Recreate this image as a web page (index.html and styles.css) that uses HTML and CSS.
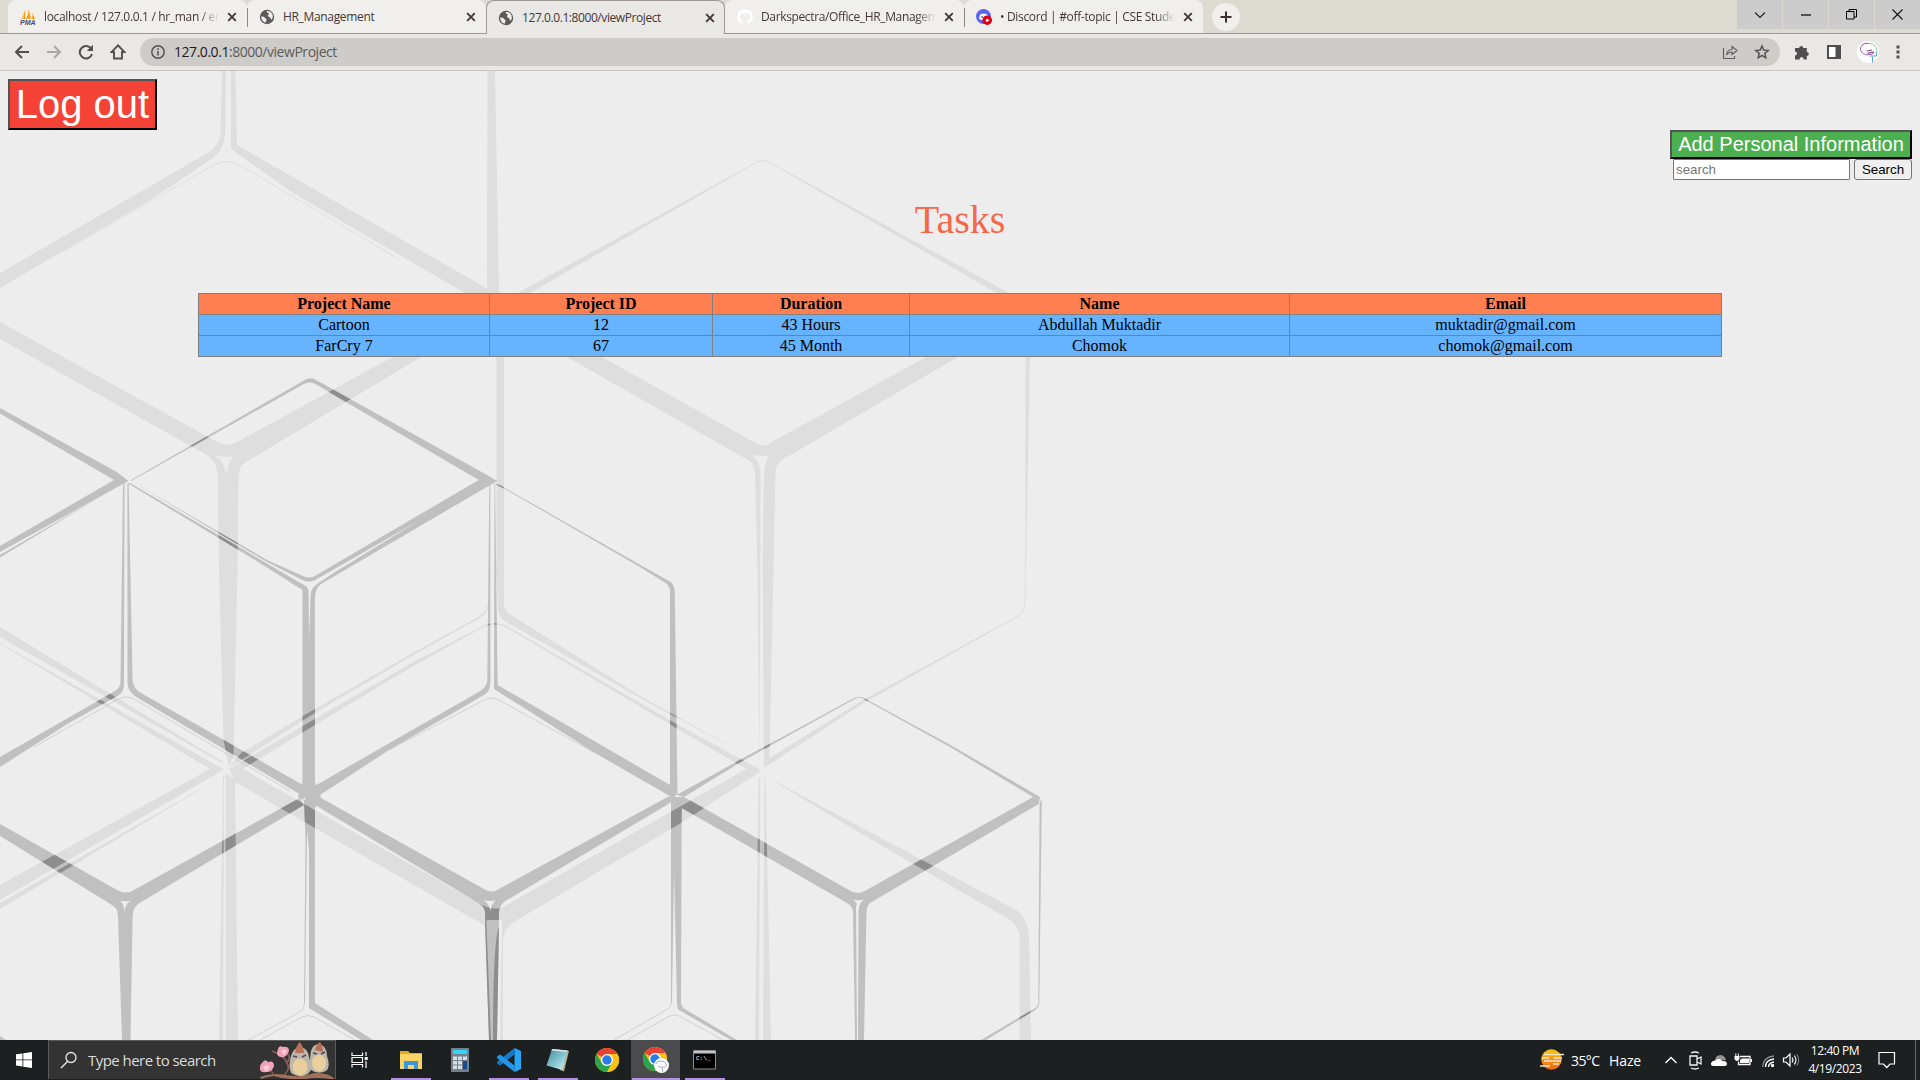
FILE: index.html
```html
<!DOCTYPE html>
<html lang="en">
<head>
<meta charset="utf-8">
<title>127.0.0.1:8000/viewProject</title>
<link rel="stylesheet" href="styles.css">
</head>
<body>
<svg class="defs" width="0" height="0" aria-hidden="true">
  <defs>
    <symbol id="i-close" viewBox="0 0 10 10"><path d="M1.2 1.2l7.6 7.6M8.8 1.2L1.2 8.8" stroke="#45363a" stroke-width="1.9"/></symbol>
    <symbol id="i-globe" viewBox="0 0 16 16"><circle cx="8" cy="8" r="7.2" fill="#5a5a5a"/><path d="M7.5 2.2c2-.5 4.500.5 5.600 2.400.9 1.700 1 4-.1 5.800-1.200.3-1.700-.9-1.500-2-1.300-.2-2.600-.8-2.400-2.200 0-1 1-1.100.700-1.900-.8-.4-1.700-.6-2.300-2.100zM2.200 7.600c1.500.2 2.900.1 3.500 1 .4 1 1.700 1 1.900 2.200-.2 1-.7 1.700-.9 3C4 13 2 10.800 2.200 7.600z" fill="#f0efeb"/></symbol>
    <symbol id="i-chrome" viewBox="0 0 24 24"><circle cx="12" cy="12" r="12" fill="#fbc116"/><path d="M12 12L1.600 6A12 12 0 0 1 22.400 6H12z" fill="#e94234"/><path d="M1.600 6A12 12 0 0 0 12 24l5.200-9L12 12 6.800 15z" fill="#2ba24c"/><path d="M22.400 6H12l5.200 9L12 24A12 12 0 0 0 22.400 6z" fill="#fbc116"/><circle cx="12" cy="12" r="6" fill="#fff"/><circle cx="12" cy="12" r="4.700" fill="#2a7de9"/></symbol>
  </defs>
</svg>
<div class="screen">
  <header class="tabstrip">
    <div class="tab">
      <svg class="fav" viewBox="0 0 16 16"><path d="M1 10Q4 6 5 1l.5 9zM6 10Q9 5 8.500 0L11 9.500zM11.500 10q1.500-3 .5-6l3 6z" fill="#f89c0e"/><path d="M1 10Q4 6 4 2l-.5 8z" fill="#fbcf8a"/><text x="0" y="16" class="pma">PMA</text></svg>
      <span class="title fade t1">localhost / 127.0.0.1 / hr_man / em</span><svg class="x"><use href="#i-close"/></svg>
    </div>
    <div class="tab sep"><svg class="fav"><use href="#i-globe"/></svg><span class="title t2">HR_Management</span><svg class="x"><use href="#i-close"/></svg></div>
    <div class="tab active"><svg class="fav"><use href="#i-globe"/></svg><span class="title t3">127.0.0.1:8000/viewProject</span><svg class="x"><use href="#i-close"/></svg></div>
    <div class="tab">
      <svg class="fav" viewBox="0 0 16 16"><path d="M8 .3a7.700 7.700 0 0 0-2.600 15v-2.200c-2 .4-2.600-.9-2.900-1.500l1 .3c.6 1 1.400.9 2 .7.100-.5.300-.8.500-1C3.800 11.300 3 10 3 8c0-1 .3-1.700.8-2.300-.1-.5-.2-1.300.1-2.100 1 0 1.800.5 2.300.9a7 7 0 0 1 3.600 0c.6-.4 1.400-.9 2.300-.9.3.8.2 1.600.1 2.100.5.600.8 1.300.8 2.300 0 2-.9 3.300-3 3.600.4.400.6.900.6 1.700v2A7.700 7.700 0 0 0 8 .3z" fill="#fff"/></svg>
      <span class="title fade t4">Darkspectra/Office_HR_Managemen</span><svg class="x"><use href="#i-close"/></svg>
    </div>
    <div class="tab sep">
      <svg class="fav" viewBox="0 0 16 16"><circle cx="7.500" cy="7.500" r="7.500" fill="#5865f2"/><path d="M3.200 10c0-3 1-5 2.300-5.200h4C10.500 5 11.500 6 12 8l-2 3H5.500z" fill="#fff"/><circle cx="6" cy="8" r="1" fill="#5865f2"/><circle cx="11.200" cy="11.200" r="4.800" fill="#e00012"/><circle cx="11.200" cy="11.200" r="1.500" fill="#fff"/></svg>
      <span class="title fade t5">• Discord | #off-topic | CSE Studen</span><svg class="x"><use href="#i-close"/></svg>
    </div>
    <div class="newtab"><svg width="12" height="12"><path d="M6 .5v11M.5 6h11" stroke="#3c3034" stroke-width="2"/></svg></div>
    <div class="winbtns">
      <div class="wb"><svg width="12" height="8"><path d="M1 1.500l5 5 5-5" fill="none" stroke="#222" stroke-width="1.100"/></svg></div>
      <div class="wb"><svg width="10" height="2"><path d="M0 1h10" stroke="#000" stroke-width="1.200"/></svg></div>
      <div class="wb"><svg width="11" height="11"><path d="M.5 2.500h7.500V10H.5zM3 2.500V.5h7.500V8H8" fill="none" stroke="#000"/></svg></div>
      <div class="wb"><svg width="11" height="11"><path d="M.5.5l10 10M10.500.5l-10 10" stroke="#111" stroke-width="1.100"/></svg></div>
    </div>
  </header>

  <nav class="toolbar">
    <svg class="nav" viewBox="0 0 16 16"><path d="M15 8H2.500M8 2L2 8l6 6" fill="none" stroke="#505050" stroke-width="2"/></svg>
    <svg class="nav" viewBox="0 0 16 16"><path d="M1 8h12.500M8 2l6 6-6 6" fill="none" stroke="#a9a8a6" stroke-width="2"/></svg>
    <svg class="nav" viewBox="0 0 16 16"><path d="M13.300 5A6.200 6.200 0 1 0 14 10" fill="none" stroke="#505050" stroke-width="2"/><path d="M15 .8V7H8.800z" fill="#505050"/></svg>
    <svg class="nav" viewBox="0 0 16 16"><path d="M8 1.300L1.500 8H4v6.500h8V8h2.500z" fill="none" stroke="#505050" stroke-width="1.900"/></svg>
    <div class="omnibox">
      <svg width="14" height="14"><circle cx="7" cy="7" r="6.200" fill="none" stroke="#55565a" stroke-width="1.500"/><path d="M7 6v4.500M7 3.300v1.600" stroke="#55565a" stroke-width="1.600"/></svg>
      <span class="url"><b>127.0.0.1</b>:8000/viewProject</span>
      <svg class="share" width="16" height="16" viewBox="0 0 16 16"><path d="M1.500 4v10.500h11V12M4.500 11c.5-4 2.500-5.500 5.500-5.500V2.500l5 4-5 4V8c-2.500 0-4 .8-5.500 3z" fill="none" stroke="#606164" stroke-width="1.200"/></svg>
      <svg width="16" height="16" viewBox="0 0 16 16"><path d="M8 2l1.700 4.100 4.500.4-3.400 2.900 1 4.400L8 11.500l-3.800 2.300 1-4.400-3.400-2.900 4.500-.4z" fill="none" stroke="#55565a" stroke-width="1.500"/></svg>
    </div>
    <div class="tools">
      <svg width="16" height="16" viewBox="0 0 16 16"><path d="M1 4h4.200a2 2 0 1 1 4 0h3.600v4a2 2 0 1 1 0 4v3.500H9.500a1.900 1.900 0 1 0-3.700 0H1v-4a2 2 0 1 0 0-4z" fill="#4f4f4f"/></svg>
      <svg width="14" height="14"><path d="M1 1h12v12H1z" fill="#fff" stroke="#4f4f4f" stroke-width="2"/><path d="M8.500 0H14v14H8.500z" fill="#4f4f4f"/></svg>
      <svg width="22" height="22"><circle cx="11" cy="11" r="11" fill="#fff"/><path d="M3.500 8.500C3 4 8 1.500 12 2.500" fill="none" stroke="#8a4f9b"/><path d="M12 2.500c5 0 9 4 7.500 9.500" fill="none" stroke="#8cc8b0"/><path d="M3.500 8.500c1 4 4 5 7.500 5.500" fill="none" stroke="#7d60c0"/><path d="M10 10l5-1M11 13c3 1 5 0 6-2l-6 1z" fill="none" stroke="#7c3f8c"/><path d="M19.500 12v3h-7M15.500 15.500v6" fill="none" stroke="#5aa4cf"/></svg>
      <svg width="4" height="14"><path d="M.5.500h3v3h-3zM.5 5.500h3v3h-3zM.5 10.500h3v3h-3z" fill="#505050"/></svg>
    </div>
  </nav>

  <main class="page">
    <svg class="cubes" viewBox="0 71 1920 969" width="1920" height="969" aria-hidden="true">
      <defs>
        <clipPath id="light">
          <path d="M222 71h4l-1 64q-1 14-12 23L155 197 0 288V273L208 152.700Q220 146 220.500 132z"/>
          <path d="M231 71h4.500L237 145 488 289V293L497 298 490 310 465 293 293 193 231 149z"/>
          <path d="M487.500 71h7.500L499 293 504 357V605Q505 612 511 615L760 769 748 770 540 645 505 621Q498 617 498 607L496.500 570V357H489.500L487 293z" class="none"/>
          <path d="M487.500 71h7.500L499 293 504 357V605Q505 612 511 615L640 696 758 761 640 698 505 621Q498 617 498 607L496.500 570V357H489.500L487 293z"/>
          <path d="M440 340L517.500 293 757 161.500Q763 158.500 769 161.500L1009 293 1030 306V357L1026 570H1025.300V357L1020 306 996.600 293 769 162.500Q763 159.500 757 162.500L530 293 500 312z"/>
          <path d="M500 315L602 357 755.500 443Q762.500 448 770 443L926 357 1010 305 1030 306 958 357 782 460Q775.500 465 775.500 473L773.500 570 769.500 758 863 700 1018 615.500Q1024.600 611 1024.600 604L1025.200 545H1026L1025.600 604Q1025 612 1018 616.700L863 703.500 764 768 762.500 560 764 473Q765 462 769 455.500 762 457.500 752 454.500 760.500 462 760.500 475V570L759.500 763 757.500 570 755 473Q754 463 748 460L567 357 490 318z"/>
          <path d="M0 322L218.600 442.700Q227 447 237.600 441.700L392.500 357 470 314 495 314 421 357 244.500 463Q239 467 238.600 475L237.500 570 233.500 755 229 767 223.500 740 219 570 217.600 473Q216 461 206.600 455L0 339z"/>
          <path d="M0 627L223 762V763.500L0 637zM0 643L224 769.500 0 900V885L210 769 0 643.700zM223 776L0 909V903z"/>
          <path d="M229 768L241 753 310 711.700 410 654.500 479 616.500Q487 612 487 605H488Q488 613 480 618L410 657 310 716z"/>
          <path d="M229 769L310 721.700 410 664 483 625.800Q495 621 506 625.500L675 723 761 770 748 770 675 727.500 505 626.700Q495 622.200 484 626.800L410 668 310 728 241 770z"/>
          <path d="M229 768L241 768 482 905Q494 911 503 907L748 768 761 771 681 823 512 923Q504 930 503 940V1040H500L502 920 487 920 485.500 926 235 782z"/>
          <path d="M223 776h1L223 1040h-4zM225.500 773L235 780 238 1040H225.500z"/>
          <path d="M758.600 777h1.700L759 1040h-4zM764.500 777h1L771 1040h-8z"/>
          <path d="M765 776L1016 910Q1028 918 1029 937L1031 1040H1019.600V937Q1019 926 1010 920L860 833z"/>
        </clipPath>
        <clipPath id="dark">
          <path d="M0 408L117 472 128.500 481 0 552V546L114 480 0 413.500zM100 497L0 555V557.500z"/>
          <path d="M123 483h1.500L124 683Q124 692 119 695L69 723 0 767V757L115 691Q120.500 688 120.500 681zM127.400 483h1.200L132.600 681Q134 689 141 693L306.500 787 301 795 138 698Q127.500 692 127.500 683z"/>
          <path d="M131 480L303 381Q310 376 317 380.500L487 475 497 481 345 570 321 584Q316 587 315 597V787H302.500V590L255 560 128 483.500 130 483 261 560 306.500 586.500 308.500 590 309 640 310.500 597Q310.500 588 317 584L335 572 420 520 331 571 315 580Q309 583 302 580L263.500 560 131 481 267 560 303 576Q309 579 315 576L325 570 478.600 480 317 385Q310 380.500 303 384.500L131 481z"/>
          <path d="M302.500 783H315L321 797 315 808 298 797z"/>
          <path d="M489.300 483h1L490.400 683Q490 692 484 695L389 750 317 797 311 788 478.600 692Q487.300 687 487.300 680zM494.500 483h.6L497.600 685 670 785 677 793 673 798 595 753 494 689z"/>
          <path d="M494.500 484Q500 484 505 488L644 567 669 581Q674.800 584 674.800 592L677.500 795 670 790V593Q671 588 667 584L640 567 505 489z"/>
          <path d="M0 824L117 890Q126 895 134 890L299.600 798 304 805 139.500 903Q132.600 907 132.600 917L130.500 1040H122L118 917Q118 908 112 905L0 836zM0 1036L6 1040H0z"/>
          <path d="M304 800L315 808V1003L373 1040H361L309 1008V850L307 830 305 1003 304 1003 305.500 840z"/>
          <path d="M311 788L319 797 484 889Q492 894 499 889L667.500 797 675 796 670 803 507 900Q499 904 499 913L497 1040H489L485 913Q485 907 478.600 903L306.500 800z"/>
          <path d="M671 793L675 796 740 759.800 855 697.500Q859 695.800 863 697.500L950 744.700 1040 797 1038.700 804 870 903Q866.500 906 866.500 913L864 1040H858L858.500 905 856 905 857 1040H855L853 912Q853 907 847 903L681.700 808 681 1003 683 1008 737 1040H731L679 1010Q677 1008 677 1003L674 870 672 1003H671L671 797 684 797 849 890Q858 896 866.500 890L1033 797 950 747 862 698.200Q859 697 856 698.200L740 762.500 684 797z"/>
          <path d="M1039.600 803L1041.800 799 1039.300 1003Q1039 1009 1031 1012.500L986 1040H981L1031 1010.500Q1038.300 1007 1038.300 1003z"/>
        </clipPath>
      </defs>
      <g clip-path="url(#light)"><rect y="71" width="1100" height="969" fill="#dedede"/></g>
      <g clip-path="url(#dark)"><rect y="71" width="1100" height="969" fill="#c0c0c0"/></g>
      <g clip-path="url(#light)"><g clip-path="url(#dark)"><rect y="71" width="1100" height="969" fill="#8e8e8e"/></g></g>
      <path d="M499 927L497 1040H493Q493 940 499 927zM485 924h1.500L491 1040h-2z" fill="#8e8e8e"/>
      <path d="M484 900Q490 902 496 900 491 904 490.700 911 489 904 484 900zM120 900.500Q126 902 131 900.500 125 904 124.500 912 124 904 120 900.500zM853 899.500Q859 901 864 899.500 859 903 858.500 911 858 903 853 899.500zM215 455.500Q226 458 234 456 227 462 226.500 476 225 461 215 455.500zM302 800L306 797.500 305 800z" fill="#ededed"/>
      <g fill="none" stroke="#c6c6c6" stroke-width=".7">
        <path d="M34 747L118 699Q126 695 134 699L290 791M389 750L484 700Q491.500 696 499 700L595 753"/>
        <path d="M260 1040L302 1017Q308 1014 314 1017L355 1040M304.700 1003Q304 1009 299.600 1012L248.600 1040M671.300 1003Q671 1008 666 1010L614 1040M627 1040L668 1017Q674.500 1013 681 1017L723 1040"/>
      </g>
      <g fill="none" stroke="#dedede" stroke-width=".9">
        <path d="M60 253L216 164Q227 159 238 164L400 260"/>
      </g>
    </svg>
    <div class="content">
      <button class="logout">Log out</button>
      <div class="side">
        <button class="add">Add Personal Information</button>
        <form class="find"><input type="text" placeholder="search"><button type="button" class="go">Search</button></form>
      </div>
      <h1 class="heading">Tasks</h1>
      <table class="tasks">
        <colgroup><col class="c1"><col class="c2"><col class="c3"><col class="c4"><col class="c5"></colgroup>
        <tr><th>Project Name</th><th>Project ID</th><th>Duration</th><th>Name</th><th>Email</th></tr>
        <tr><td>Cartoon</td><td>12</td><td>43 Hours</td><td>Abdullah Muktadir</td><td>muktadir@gmail.com</td></tr>
        <tr><td>FarCry 7</td><td>67</td><td>45 Month</td><td>Chomok</td><td>chomok@gmail.com</td></tr>
      </table>
    </div>
  </main>

  <footer class="taskbar">
    <div class="start"><svg width="16" height="16"><path d="M0 2.300L6.500 1.400V7.500H0zM7.300 1.300L16 0V7.500H7.300zM0 8.300H6.500V14.500L0 13.600zM7.300 8.300H16V16L7.300 14.700z" fill="#fff"/></svg></div>
    <div class="searchbox">
      <svg width="18" height="18"><circle cx="11" cy="6.500" r="5" fill="none" stroke="#e6e6e6" stroke-width="1.300"/><path d="M7.500 10.500L1 17" stroke="#e6e6e6" stroke-width="1.400"/></svg>
      <span class="prompt">Type here to search</span>
      <svg class="birds" width="77" height="38" viewBox="0 0 77 38">
        <path d="M2 36Q14 31 28 34 44 37 56 32 70 31 77 38L72 38Q60 36 46 38 28 39 16 35 8 36 3 38z" fill="#a0705a"/>
        <path d="M26 34Q33 28 29 22 27 15 14 10M28 22Q32 20 31 13M15 33l-3-6" fill="none" stroke="#8e5f53" stroke-width="1.600"/>
        <path d="M4 22q3-5 6-1 6-2 6 4-2 6-7 6-8 1-7-4 0-4 2-5zM20 8q1-4 5-2 5-1 6 3 0 5-5 7-5 1-7-3 0-3 1-5z" fill="#f0a3b8"/><path d="M5 26q5-4 7 0l-4 5zM23 10q4-3 6 0l-3 4z" fill="#ffcbd8"/>
        <path d="M33 15Q35 7 42 6q8 1 9 10 5 13-1 17-9 5-17-1-3-8 0-17z" fill="#bdb6ab"/><path d="M53 10Q55 3 61 3q8 2 8 12 4 11-1 15-8 4-15-1-2-9 0-19z" fill="#bdb6ab"/>
        <ellipse cx="42" cy="26" rx="7.500" ry="8.500" fill="#e9cf9d"/><ellipse cx="61" cy="22" rx="7" ry="8.500" fill="#e9cf9d"/>
        <path d="M37 12Q38 4 42 1q4 6 4 11zM57 9q1-6 5-8 3 4 3 10z" fill="#b97054"/><path d="M35 15l4 1M44 16l4-2M55 12l4 1M63 13l4-2" stroke="#54465c" stroke-width="1.800"/>
      </svg>
    </div>
    <div class="taskview"><svg width="17" height="16"><path d="M1 .5V3.500H11.500V.5M1 15.500V12.500H11.500v3M1 5.500H11.500v5H1zM15 0v4M15 9v7" fill="none" stroke="#fff" stroke-width="1.200"/><path d="M13.700 5h3v3h-3z" fill="#fff"/></svg></div>
    <div class="apps">
      <div class="app open"><svg width="22" height="20"><path d="M0 1h8l2 2h12v16H0z" fill="#e9a91c"/><path d="M0 4h22v15H0z" fill="#fbd465"/><path d="M4 11h14v8h-4v-4H8v4H4z" fill="#3c96dc"/></svg></div>
      <div class="app"><svg width="18" height="24"><rect width="18" height="24" rx="1" fill="#75818c"/><path d="M2 2h14v4H2z" fill="#35d3f5"/><path d="M2 8.500h4v3.500H2zM7 8.500h4v3.500H7zM12 8.500h4v3.500h-4zM2 13h4v3.500H2zM7 13h4v3.500H7zM2 17.500h4V21H2zM7 17.500h4V21H7z" fill="#d6dde3"/><path d="M12 13h4v8.500h-4z" fill="#174b8c"/></svg></div>
      <div class="app open"><svg width="24" height="24"><path d="M17.500 0v6.500L3 17.500 0 15.500 0 14z" fill="#1479c6"/><path d="M17.500 24v-6.500L3 6.500 0 8.500V10z" fill="#2196e8"/><path d="M17.500 0L24 3v18l-6.500 3z" fill="#29a5f5"/></svg></div>
      <div class="app open"><svg width="24" height="24"><defs><linearGradient id="pad" x2="1" y2="1"><stop stop-color="#3c8c9b"/><stop offset=".6" stop-color="#8fcdd6"/><stop offset="1" stop-color="#d9f3f3"/></linearGradient></defs><path d="M7 1L23 3 18 23.500 14 22z" fill="#b9ab8c"/><path d="M6 1L21.500 2.500 16.500 22 .5 17.500z" fill="url(#pad)"/><path d="M6 1L21.500 2.500 21 4 5.500 2.500z" fill="#dfe7e6"/></svg></div>
      <div class="app"><svg width="24" height="24"><use href="#i-chrome"/></svg></div>
      <div class="app open current"><svg width="26" height="26"><svg width="24" height="24"><use href="#i-chrome"/></svg><circle cx="18.500" cy="18.500" r="7.500" fill="#fff"/><path d="M13 17c0-4 8-4 10 0s-6 4-8 2M19 21l1 4" fill="none" stroke="#93a9cf"/></svg></div>
      <div class="app open last"><svg width="24" height="20"><path d="M.5.500h22v18.500H.5z" fill="#000" stroke="#8d8d8d"/><path d="M1 1h21.500v2.500H1z" fill="#bfc5c8"/><text x="3" y="9.500" class="cmd">C:\_</text></svg></div>
    </div>
    <div class="weather">
      <svg width="24" height="22"><defs><linearGradient id="sun" x2="0" y2="1"><stop stop-color="#fcc60f"/><stop offset="1" stop-color="#ef6413"/></linearGradient></defs><circle cx="11.500" cy="10.500" r="10.300" fill="url(#sun)"/><path d="M4 5.500h20M14 9h8M4 12h17M0 17h10M13 15h6M2 9h7" stroke="#f4e5cf" stroke-width="1.500"/></svg>
      <span class="deg">35°C</span><span class="haze">Haze</span>
    </div>
    <div class="tray">
      <svg viewBox="0 0 24 24"><path d="M6.500 15l5.500-5.500 5.500 5.500" fill="none" stroke="#fff" stroke-width="1.300"/></svg>
      <svg viewBox="0 0 24 24"><path d="M7 8h7v9H7zM14 11l4-2v7l-4-2M8 5q4-2 8 0M8 20q4 2 8 0" fill="none" stroke="#f2f2f2" stroke-width="1.300"/></svg>
      <svg viewBox="0 0 24 24"><path d="M8 13q0-6 6-6 4 1 5 5z" fill="#949494"/><path d="M6.500 18q-3 0-2.500-3 1-2.500 4-2.500 5-3 7 .5 5-.5 5 3 0 2-2 2z" fill="#fff"/></svg>
      <svg viewBox="0 0 24 24"><path d="M9 8.500h10v8H7.500v-3" fill="none" stroke="#fff" stroke-width="1.300"/><path d="M11 10.500h7v4.500H9v-3zM19.500 11h1.500v3h-1.500zM3.500 8h5v3q-1 2-2.500 2t-2.500-2zM4.300 5.500h1V8h-1zM6.800 5.500h1V8h-1z" fill="#fff"/></svg>
      <svg class="wifi" viewBox="0 0 26 24"><path d="M7.500 19Q8.500 9 19 8" fill="none" stroke="#8a8a8a" stroke-width="1.300"/><path d="M10.500 19q0-7 8.500-8M13.500 19q0-4 5.500-5" fill="none" stroke="#fff" stroke-width="1.300"/><circle cx="17.500" cy="17.500" r="1.700" fill="#fff"/></svg>
      <svg class="vol" viewBox="0 0 20 24"><path d="M2.500 10H5l4-4v12l-4-4H2.500z" fill="none" stroke="#fff" stroke-width="1.200"/><path d="M11 9.500q2 2.500 0 5M13.200 7.500q3.500 4.500 0 9" fill="none" stroke="#fff" stroke-width="1.100"/><path d="M15.500 6q4.500 6 0 12" fill="none" stroke="#888"/></svg>
    </div>
    <div class="clock"><span>12:40 PM</span><span>4/19/2023</span></div>
    <div class="note"><svg width="18" height="18"><path d="M1 1.500h15.500V13H12l-3.200 3.500L5.500 13H1z" fill="none" stroke="#fff" stroke-width="1.200"/></svg></div>
  </footer>
</div>
</body>
</html>
```
FILE: styles.css
```css
* { box-sizing: border-box; }
body { margin: 0; overflow: hidden; }
svg { display: block; flex: none; }
.defs { position: absolute; }
.none { display: none; }
.screen { width: 1920px; height: 1080px; display: flex; flex-direction: column; font-family: "Open Sans", "Noto Sans", sans-serif; }

/* tab strip */
.tabstrip { height: 34px; display: flex; background: #dddad2; padding-left: 8px; border-bottom: 1px solid #9c9994; }
.tab { width: 239px; height: 33px; background: #f0efeb; display: flex; align-items: center; padding-left: 12px; border-radius: 8px 8px 0 0; position: relative; }
.tab.sep::before { content: ""; position: absolute; left: 0; top: 8px; width: 1px; height: 19px; background: #8d8a86; }
.tab.active { height: 34px; padding-left: 11px; background: #e9e8e4; border: 1px solid #9c9994; border-bottom: 0; z-index: 1; }
.fav { width: 16px; height: 16px; }
.pma { font: italic bold 7px "Liberation Sans", sans-serif; fill: #45467d; }
.title { width: 175px; margin-left: 8px; font-size: 12px; line-height: 18px; white-space: nowrap; overflow: hidden; color: #45363a; letter-spacing: -0.33px; }
.t3 { letter-spacing: -0.42px; }
.t4 { letter-spacing: -0.36px; }
.fade { -webkit-mask-image: linear-gradient(90deg, #000 155px, transparent 175px); mask-image: linear-gradient(90deg, #000 155px, transparent 175px); }
.x { width: 10px; height: 10px; margin-left: 8px; }
.newtab { width: 28px; height: 28px; border-radius: 50%; background: #f0efeb; display: grid; place-items: center; margin: 3px 0 0 9px; }
.winbtns { margin-left: auto; display: flex; gap: 1px; height: 29px; }
.wb { width: 45px; background: #ccc; display: grid; place-items: center; }

/* toolbar */
.toolbar { height: 37px; background: #e9e8e4; border-bottom: 1px solid #c8c6bf; display: flex; align-items: center; padding-left: 14px; }
.nav { width: 16px; height: 16px; margin-right: 16px; }
.omnibox { width: 1640px; height: 28px; margin-left: -2px; border-radius: 14px; background: #cdccc8; display: flex; align-items: center; padding: 0 10px 0 11px; }
.url { margin-left: 9px; font-size: 14px; line-height: 20px; color: #5c5a5b; letter-spacing: -0.46px; }
.url b { font-weight: 400; color: #251a1d; }
.share { margin-left: auto; margin-right: 16px; }
.tools { flex: 1; display: flex; align-items: center; padding: 0 20px 0 14px; justify-content: space-between; }

/* web page */
.page { height: 969px; background: #ededed; position: relative; overflow: hidden; }
.cubes { position: absolute; left: 0; top: 0; }
.content { position: relative; padding: 8px; display: flex; flex-direction: column; }
.content button, .content input { font-family: "Liberation Sans", Arial, sans-serif; }
.logout { align-self: flex-start; width: 149px; height: 51px; padding: 0; font-size: 40px; line-height: 45px; color: #fff; background: #f44336; border: 2px outset #000; white-space: nowrap; }
.side { align-self: flex-end; display: flex; flex-direction: column; align-items: flex-end; }
.add { width: 242px; height: 29px; padding: 0; font-size: 20px; line-height: 23px; color: #fff; background: #4caf50; border: 2px outset #000; white-space: nowrap; }
.find { display: flex; gap: 4px; }
.find input { width: 177px; height: 21px; padding: 1px 2px; font-size: 13.33px; border: 1px solid #767676; border-radius: 1px; background: #fff; }
.find input::placeholder { color: #757575; }
.go { width: 58px; height: 21px; padding: 0; font-size: 13.33px; color: #000; background: #efefef; border: 1px solid #767676; border-radius: 3px; }
.heading { margin: 17px 0 0; text-align: center; font: 400 40px/46px "Liberation Serif", "Times New Roman", serif; color: #f46748; }
.tasks { width: 1524px; margin: 50px auto 0; table-layout: fixed; border-collapse: collapse; font: 16px/18px "Liberation Serif", "Times New Roman", serif; color: #000; text-align: center; }
.c1 { width: 291px; }
.c2 { width: 223px; }
.c3 { width: 197px; }
.c4 { width: 380px; }
.tasks th, .tasks td { padding: 1px; border: 1px solid #808080; background: #66b3ff; }
.tasks th { background: #ff7f50; }

/* taskbar */
.taskbar { height: 40px; background: #1d2021; display: flex; align-items: stretch; color: #fff; }
.taskbar > div { display: flex; align-items: center; }
.start { width: 48px; padding-left: 16px; }
.taskbar > .searchbox { width: 288px; height: 39px; background: #333; border: 1px solid #5b5b5b; border-width: 1px 1px 0; padding-left: 11px; }
.prompt { margin-left: 10px; width: 132px; font-size: 15px; line-height: 22px; color: #dcdcdc; white-space: nowrap; letter-spacing: -0.55px; }
.birds { margin-left: auto; }
.taskview { width: 50px; padding-left: 15px; }
.app { width: 49px; height: 40px; display: grid; place-items: center; border: solid #1d2021; border-width: 0 4px; position: relative; }
.app.open::after { content: ""; position: absolute; left: 1px; right: 0; bottom: 0; height: 2px; background: #b28fe3; }
.app.current { background: #4a4b4d; border-width: 0; }
.cmd { font: 6px "Liberation Mono", monospace; fill: #fff; }
.taskbar > .weather { margin-left: auto; width: 119px; }
.deg { margin-left: 7px; width: 38px; font-size: 14px; letter-spacing: -0.6px; }
.haze { font-size: 14px; letter-spacing: -0.1px; }
.tray svg { width: 24px; height: 24px; }
.tray svg.wifi { width: 26px; }
.tray svg.vol { width: 20px; }
.taskbar > .clock { width: 68px; flex-direction: column; justify-content: center; font-size: 12px; line-height: 18px; letter-spacing: -0.4px; white-space: nowrap; }
.note { width: 51px; padding-left: 9px; background: linear-gradient(#666, #666) 46px 0 / 1px 40px no-repeat; }
```
